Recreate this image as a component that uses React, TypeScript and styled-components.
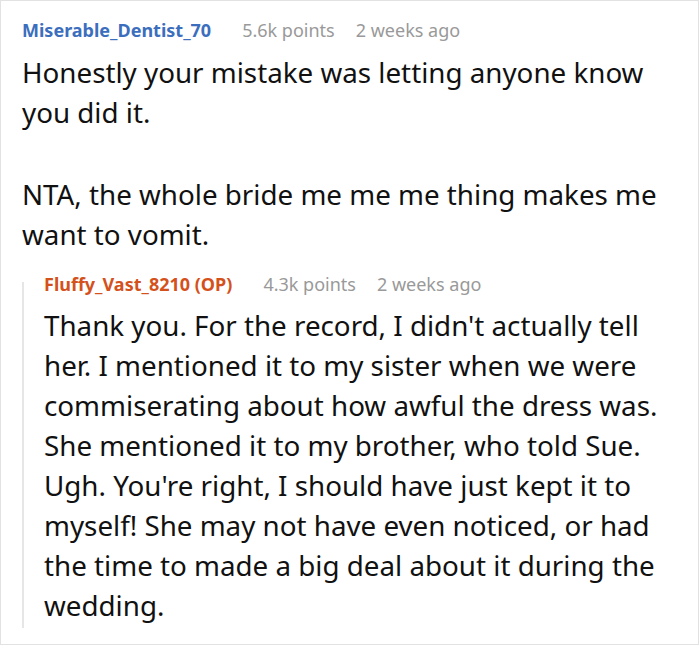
import styled, { createGlobalStyle } from 'styled-components';

const GlobalStyle = createGlobalStyle`
  html, body {
    margin: 0;
    padding: 0;
    background: #ffffff;
  }
  body {
    font-family: 'Noto Sans', 'Open Sans', sans-serif;
  }
`;

interface CommentData {
  author: string;
  isOp?: boolean;
  points: string;
  time: string;
  paragraphs: string[];
  replies?: CommentData[];
}

const thread: CommentData = {
  author: 'Miserable_Dentist_70',
  points: '5.6k points',
  time: '2 weeks ago',
  paragraphs: [
    'Honestly your mistake was letting anyone know you did it.',
    'NTA, the whole bride me me me thing makes me want to vomit.',
  ],
  replies: [
    {
      author: 'Fluffy_Vast_8210 (OP)',
      isOp: true,
      points: '4.3k points',
      time: '2 weeks ago',
      paragraphs: [
        "Thank you. For the record, I didn't actually tell her. I mentioned it to my sister when we were commiserating about how awful the dress was. She mentioned it to my brother, who told Sue. Ugh. You're right, I should have just kept it to myself! She may not have even noticed, or had the time to made a big deal about it during the wedding.",
      ],
    },
  ],
};

function Comment({ comment, nested }: { comment: CommentData; nested?: boolean }) {
  return (
    <CommentBox $nested={nested}>
      <MetaRow $nested={nested}>
        <Author $op={comment.isOp}>{comment.author}</Author>
        <Points>{comment.points}</Points>
        <Time>{comment.time}</Time>
      </MetaRow>
      <Body $nested={nested}>
        {comment.paragraphs.map((p, i) => (
          <Paragraph key={i}>{p}</Paragraph>
        ))}
      </Body>
      {comment.replies?.map((r, i) => (
        <Comment key={i} comment={r} nested />
      ))}
    </CommentBox>
  );
}

export default function App() {
  return (
    <>
      <GlobalStyle />
      <Card>
        <Comment comment={thread} />
      </Card>
    </>
  );
}

const Card = styled.div`
  width: 699px;
  height: 645px;
  box-sizing: border-box;
  border: 1px solid #e2e2e2;
  padding: 15px 20px 0 21px;
  overflow: hidden;
`;

const CommentBox = styled.div<{ $nested?: boolean }>`
  display: flex;
  flex-direction: column;
  ${p =>
    p.$nested &&
    `
    margin-top: 28px;
    border-left: 2px solid #e6e6e6;
    padding-left: 20px;
    padding-bottom: 3px;
  `}
`;

const MetaRow = styled.div<{ $nested?: boolean }>`
  display: flex;
  align-items: baseline;
  height: 28px;
  line-height: 28px;
  margin-top: ${p => (p.$nested ? '-12px' : '0')};
`;

const Author = styled.span<{ $op?: boolean }>`
  font-size: 18px;
  font-weight: 700;
  color: ${p => (p.$op ? '#d4511c' : '#3c6ebe')};
  margin-right: 31px;
`;

const Points = styled.span`
  font-size: 18px;
  color: #999999;
  margin-right: 21px;
`;

const Time = styled.span`
  font-size: 18px;
  color: #999999;
`;

const Body = styled.div<{ $nested?: boolean }>`
  display: flex;
  flex-direction: column;
  gap: 42px;
  margin-top: ${p => (p.$nested ? '7px' : '8px')};
`;

const Paragraph = styled.p`
  margin: 0;
  font-size: 27.75px;
  line-height: 40px;
  color: #111111;
`;
